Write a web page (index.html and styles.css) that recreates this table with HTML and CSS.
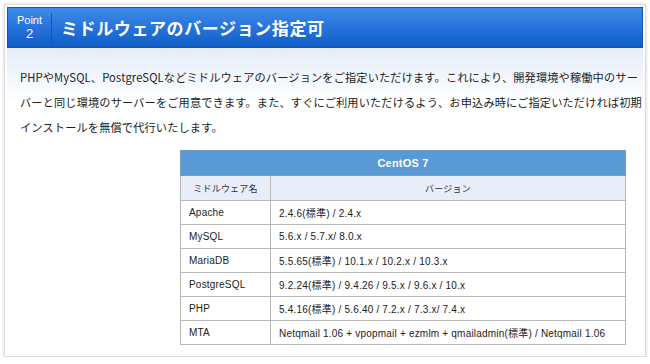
FILE: index.html
```html
<!DOCTYPE html>
<html lang="ja">
<head>
<meta charset="utf-8">
<link rel="stylesheet" href="styles.css">
</head>
<body>
<div class="box">
  <div class="head">
    <div class="point"><span class="pt-label">Point</span><span class="pt-num">2</span></div>
    <h2 class="title">ミドルウェアのバージョン指定可</h2>
  </div>
  <div class="content">
    <p class="lead">PHPやMySQL、PostgreSQLなどミドルウェアのバージョンをご指定いただけます。これにより、開発環境や稼働中のサー<br>バーと同じ環境のサーバーをご用意できます。また、すぐにご利用いただけるよう、お申込み時にご指定いただければ初期<br>インストールを無償で代行いたします。</p>
    <table class="spec">
      <thead>
        <tr><th class="os" colspan="2">CentOS 7</th></tr>
        <tr class="sub"><th class="c1">ミドルウェア名</th><th>バージョン</th></tr>
      </thead>
      <tbody>
        <tr><td class="c1">Apache</td><td>2.4.6(標準) / 2.4.x</td></tr>
        <tr><td class="c1">MySQL</td><td>5.6.x / 5.7.x/ 8.0.x</td></tr>
        <tr><td class="c1">MariaDB</td><td>5.5.65(標準) / 10.1.x / 10.2.x / 10.3.x</td></tr>
        <tr><td class="c1">PostgreSQL</td><td>9.2.24(標準) / 9.4.26 / 9.5.x / 9.6.x / 10.x</td></tr>
        <tr><td class="c1">PHP</td><td>5.4.16(標準) / 5.6.40 / 7.2.x / 7.3.x/ 7.4.x</td></tr>
        <tr><td class="c1">MTA</td><td>Netqmail 1.06 + vpopmail + ezmlm + qmailadmin(標準) / Netqmail 1.06</td></tr>
      </tbody>
    </table>
  </div>
</div>
</body>
</html>
```
FILE: styles.css
```css
html, body {
  margin: 0;
  padding: 0;
  background: #fff;
}
body {
  font-family: "Noto Sans CJK JP", "Liberation Sans", sans-serif;
  color: #222;
}
.box {
  margin: 4px 4px 0 4px;
  height: 353px;
  box-sizing: border-box;
  border: 1px solid #dcdcdc;
  box-shadow: 0 0 3px rgba(0,0,0,0.18);
  padding: 2px;
  background: #fff;
}
.head {
  height: 41px;
  box-sizing: border-box;
  background: linear-gradient(#3e8ae8, #2472da 55%, #0f5cc4);
  border: 1px solid #1454b0;
  display: flex;
  align-items: center;
  color: #fff;
}
.point {
  width: 43px;
  height: 30px;
  display: flex;
  flex-direction: column;
  align-items: center;
  border-right: 1px solid #1a55a8;
  font-family: "Liberation Sans", sans-serif;
  line-height: 1;
}
.pt-label {
  font-size: 11px;
  margin-top: 2px;
}
.pt-num {
  font-size: 13px;
  margin-top: 1px;
}
.title {
  margin: 0 0 0 9px;
  font-size: 17px;
  font-weight: bold;
  letter-spacing: 0.6px;
  line-height: 1;
}
.content {
  background: linear-gradient(#e4edf9, #fff 55px);
  padding: 17px 0 0 13px;
}
.lead {
  margin: 0;
  font-size: 11.2px;
  line-height: 25px;
  letter-spacing: 0.15px;
  white-space: nowrap;
}
.spec {
  margin: 10px 0 0 160px;
  width: 446px;
  border-collapse: collapse;
  font-family: "Liberation Sans", "Noto Sans CJK JP", sans-serif;
  font-size: 10px;
  letter-spacing: 0.2px;
  color: #222;
}
.spec th, .spec td {
  border: 1px solid #b8b8b8;
  height: 24px;
  box-sizing: border-box;
  padding: 0 8px;
}
.spec td {
  text-align: left;
}
.spec .os {
  background: #5a9ad4;
  color: #fff;
  font-size: 11px;
  font-weight: bold;
  height: 25px;
  border-color: #7a9cc0;
}
.spec .sub th {
  background: #e8eef9;
  font-weight: normal;
  font-size: 9px;
  color: #333;
  font-family: "Noto Sans CJK JP", sans-serif;
  height: 25px;
}
.spec .c1 {
  width: 90px;
}
```
